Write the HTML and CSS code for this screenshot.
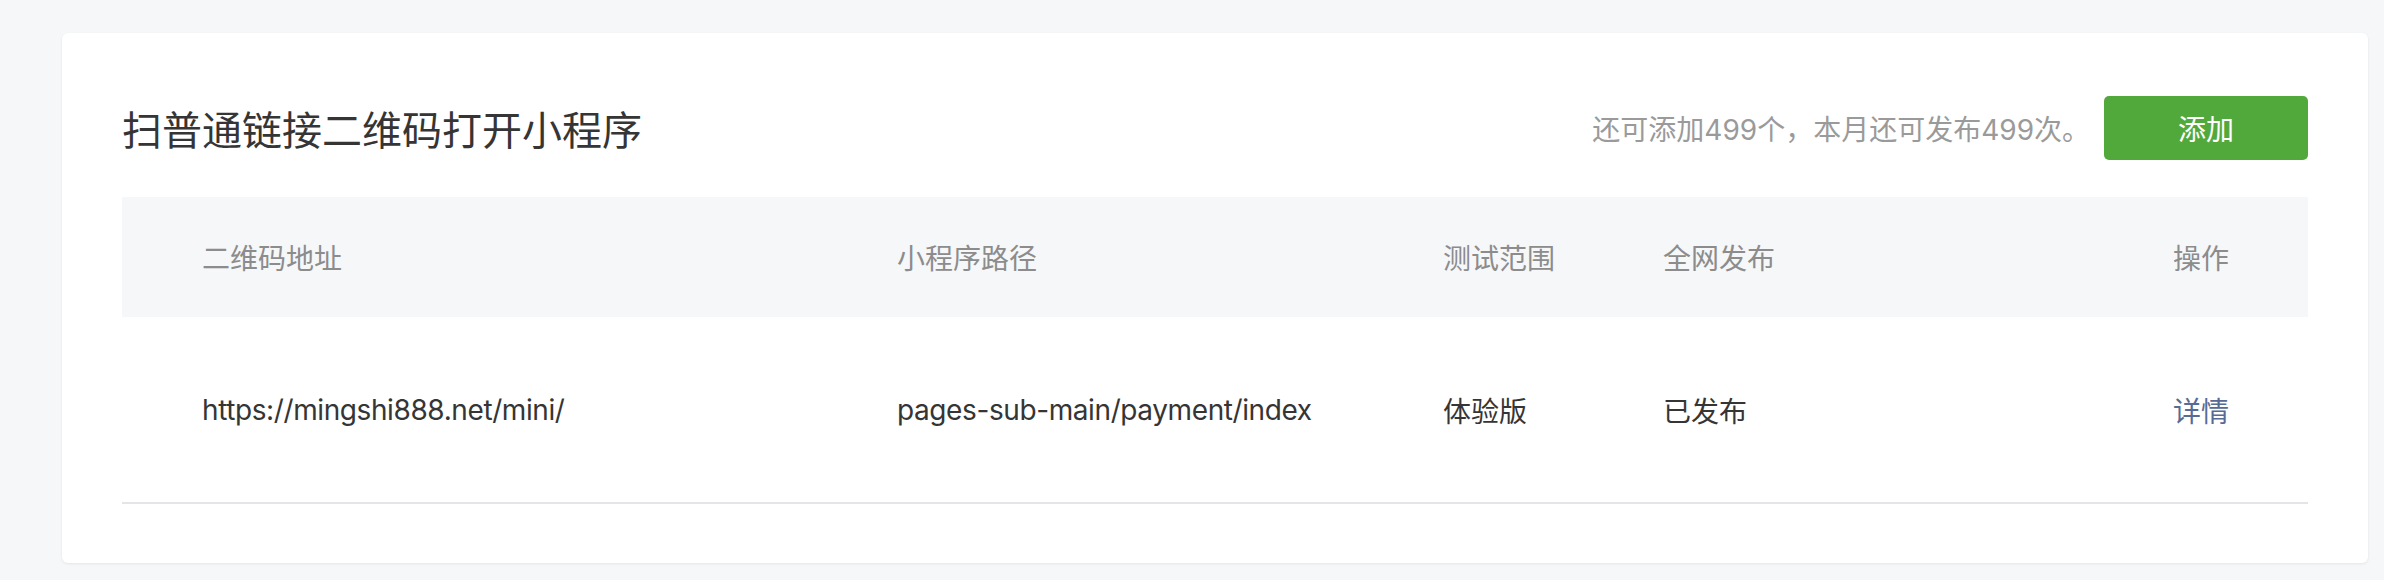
FILE: index.html
```html
<!DOCTYPE html>
<html lang="zh-CN">
<head>
<meta charset="utf-8">
<title>扫普通链接二维码打开小程序</title>
<link rel="stylesheet" href="styles.css">
</head>
<body>
<div class="page">
  <div class="card">
    <div class="card-head">
      <h2 class="title">扫普通链接二维码打开小程序</h2>
      <div class="head-right">
        <span class="tip">还可添加499个，本月还可发布499次。</span>
        <button class="btn">添加</button>
      </div>
    </div>
    <div class="table">
      <div class="thead grid">
        <div>二维码地址</div>
        <div>小程序路径</div>
        <div>测试范围</div>
        <div>全网发布</div>
        <div>操作</div>
      </div>
      <div class="trow grid">
        <div class="en">https://mingshi888.net/mini/</div>
        <div class="en">pages-sub-main/payment/index</div>
        <div>体验版</div>
        <div>已发布</div>
        <div><a class="link" href="#">详情</a></div>
      </div>
    </div>
  </div>
</div>
</body>
</html>
```
FILE: styles.css
```css
html, body {
  margin: 0;
  padding: 0;
  background: #f6f7f9;
}
body {
  font-family: Inter, "Noto Sans CJK SC", sans-serif;
  color: #353535;
}
.page {
  padding: 33px 16px 17px 62px;
}
.card {
  background: #fff;
  border-radius: 6px;
  box-shadow: 0 1px 3px rgba(0, 0, 0, 0.08);
  padding: 63px 60px 59px;
}
.card-head {
  display: flex;
  justify-content: space-between;
  align-items: center;
  height: 64px;
}
.title {
  margin: 0;
  font-size: 40px;
  font-weight: 400;
  color: #353535;
  font-family: "Noto Sans CJK SC", sans-serif;
}
.head-right {
  display: flex;
  align-items: center;
  gap: 14px;
}
.tip {
  font-size: 28px;
  color: #9a9a9a;
}
.btn {
  width: 204px;
  height: 64px;
  border: 0;
  border-radius: 5px;
  background: #52a93b;
  color: #fff;
  font-family: "Noto Sans CJK SC", sans-serif;
  font-size: 28px;
  padding: 0;
}
.table {
  margin-top: 37px;
}
.grid {
  display: grid;
  grid-template-columns: 695px 546px 220px 510px 1fr;
  align-items: center;
  padding-left: 80px;
  font-size: 28px;
}
.thead {
  height: 120px;
  background: #f6f7f9;
  color: #8c8c8c;
}
.trow {
  height: 185px;
  border-bottom: 2px solid #e4e5e9;
  color: #353535;
}
.en {
  letter-spacing: -0.4px;
}
.link {
  color: #576b95;
  text-decoration: none;
}
```
